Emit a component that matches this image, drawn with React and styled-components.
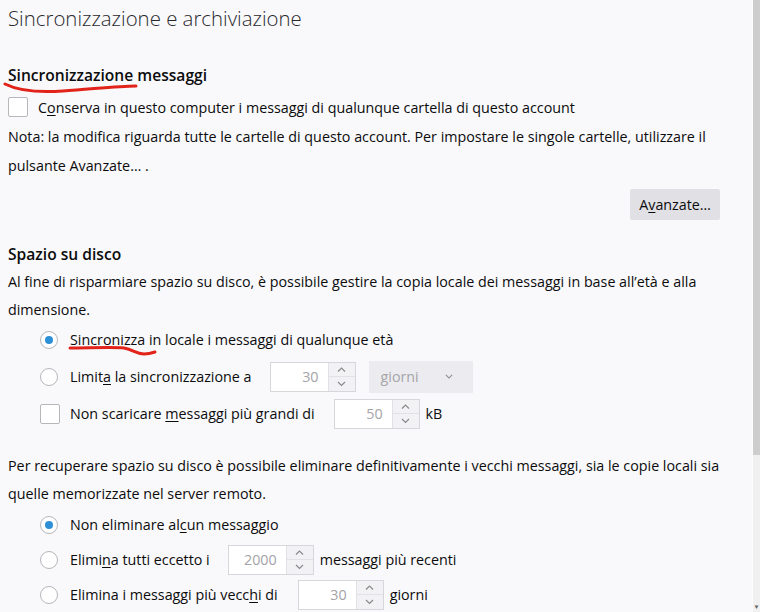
import React from 'react';
import styled, { createGlobalStyle } from 'styled-components';

const GlobalStyle = createGlobalStyle`
  html, body {
    margin: 0;
    padding: 0;
    background: #f9f9fb;
  }
  body {
    font-family: "Open Sans", "Noto Sans", "Liberation Sans", sans-serif;
    color: #0c0c0d;
  }
`;

const Page = styled.div`
  display: flex;
  width: 760px;
  height: 612px;
  overflow: hidden;
  background: #f9f9fb;
`;

const Content = styled.div`
  position: relative;
  flex: 1;
  padding: 0 28px 0 8px;
  overflow: hidden;
  font-size: 14.3px;
`;

const Scrollbar = styled.div`
  width: 7px;
  display: flex;
  flex-direction: column;
  background: #f0f0f0;
  border-left: 1px solid #fcfcfc;
`;

const Thumb = styled.div`
  height: 455px;
  background: #cdcdcd;
`;

const ScrollArrow = styled.div`
  margin-top: auto;
  height: 10px;
  display: flex;
  justify-content: center;
  align-items: center;
  color: #606060;
  font-size: 6px;
`;

const Title = styled.h1`
  margin: 0;
  font-size: 20.4px;
  font-weight: 300;
  line-height: 36px;
  color: #2a2a2e;
`;

const Heading = styled.h2`
  margin: ${(p) => p.$top || 0}px 0 0;
  font-size: 15.6px;
  font-weight: 600;
  line-height: 28px;
`;

const Para = styled.p`
  margin: ${(p) => p.$top || 0}px 0 0;
  line-height: ${(p) => p.$lh || 28}px;
`;

const Row = styled.label`
  display: flex;
  align-items: center;
  height: ${(p) => p.$h || 30}px;
  margin-top: ${(p) => p.$top || 0}px;
  padding-left: ${(p) => (p.$indent ? 32 : 0)}px;
  gap: 10px;
`;

const Group = styled.div`
  margin-top: ${(p) => p.$top || 0}px;
`;

const Box = styled.span`
  width: 18px;
  height: 18px;
  flex: none;
  border: 1px solid #b6b6bb;
  border-radius: 2px;
  background: #fff;
`;

const Radio = styled.span`
  width: 16px;
  height: 16px;
  flex: none;
  margin-right: 2px;
  border: 1px solid #b6b6bb;
  border-radius: 50%;
  background: #fff;
  display: flex;
  align-items: center;
  justify-content: center;

  &::after {
    content: '';
    width: 8px;
    height: 8px;
    border-radius: 50%;
    background: ${(p) => (p.$checked ? '#2d8fd5' : 'transparent')};
  }
`;

const Key = styled.span`
  text-decoration: underline;
  text-underline-offset: 2px;
`;

const Spin = styled.span`
  display: flex;
  width: 86px;
  height: 30px;
  box-sizing: border-box;
  border: 1px solid #d7d7db;
  background: #fff;
  margin: 0 -4px 0 ${(p) => p.$left || 0}px;
  flex: none;
`;

const SpinValue = styled.span`
  flex: 1;
  display: flex;
  align-items: center;
  justify-content: flex-end;
  padding-right: 9px;
  color: #a4a4a8;
`;

const SpinButtons = styled.span`
  width: 26px;
  display: flex;
  flex-direction: column;
  border-left: 1px solid #e2e2e6;
`;

const SpinHalf = styled.span`
  flex: 1;
  display: flex;
  align-items: center;
  justify-content: center;
  background: #f2f2f4;
  & + & {
    border-top: 1px solid #e2e2e6;
  }
`;

const Select = styled.span`
  display: flex;
  align-items: center;
  justify-content: space-between;
  box-sizing: border-box;
  width: 104px;
  height: 32px;
  padding: 0 20px 0 12px;
  margin-left: 7px;
  background: #ececf0;
  color: #a4a4a8;
`;

const ButtonRow = styled.div`
  display: flex;
  justify-content: flex-end;
  margin: 9px 4px 0 0;
`;

const Button = styled.button`
  height: 31px;
  padding: 0 9px;
  border: none;
  border-radius: 2px;
  background: #e1e1e5;
  color: #0c0c0d;
  font: inherit;
`;

const Scribble = styled.svg`
  position: absolute;
  left: ${(p) => p.$x}px;
  top: ${(p) => p.$y}px;
  pointer-events: none;
`;

const Chevron = ({ up, size = 7 }) => (
  <svg width={size + 2} height={size / 2 + 2} viewBox="0 0 9 5.5">
    <path
      d={up ? 'M1 4.5 L4.5 1 L8 4.5' : 'M1 1 L4.5 4.5 L8 1'}
      fill="none"
      stroke="#8a8a8e"
      strokeWidth="1.2"
    />
  </svg>
);

const SpinBox = ({ value, left }) => (
  <Spin $left={left}>
    <SpinValue>{value}</SpinValue>
    <SpinButtons>
      <SpinHalf>
        <Chevron up />
      </SpinHalf>
      <SpinHalf>
        <Chevron />
      </SpinHalf>
    </SpinButtons>
  </Spin>
);

export default function App() {
  return (
    <>
      <GlobalStyle />
      <Page>
        <Content>
          <Title>Sincronizzazione e archiviazione</Title>

          <Heading $top={25}>Sincronizzazione messaggi</Heading>
          <Row $top={3}>
            <Box />
            <span>
              C<Key>o</Key>nserva in questo computer i messaggi di qualunque cartella di questo account
            </span>
          </Row>
          <Para $lh={29}>
            Nota: la modifica riguarda tutte le cartelle di questo account. Per impostare le singole cartelle,
            utilizzare il pulsante Avanzate… .
          </Para>
          <ButtonRow>
            <Button>
              A<Key>v</Key>anzate…
            </Button>
          </ButtonRow>

          <Heading $top={20}>Spazio su disco</Heading>
          <Para>
            Al fine di risparmiare spazio su disco, è possibile gestire la copia locale dei messaggi in base
            all’età e alla dimensione.
          </Para>
          <Group $top={-3}>
            <Row $indent $h={37}>
              <Radio $checked />
              <span>
                Sin<Key>c</Key>ronizza in locale i messaggi di qualunque età
              </span>
            </Row>
            <Row $indent $h={37}>
              <Radio />
              <span>
                Limit<Key>a</Key> la sincronizzazione a
              </span>
              <SpinBox value="30" left={8} />
              <Select>
                giorni
                <Chevron size={6} />
              </Select>
            </Row>
            <Row $indent $h={37}>
              <Box />
              <span>
                Non scaricare <Key>m</Key>essaggi più grandi di
              </span>
              <SpinBox value="50" left={9} />
              kB
            </Row>
          </Group>

          <Para $top={20}>
            Per recuperare spazio su disco è possibile eliminare definitivamente i vecchi messaggi, sia le copie
            locali sia quelle memorizzate nel server remoto.
          </Para>
          <Group $top={-1}>
            <Row $indent $h={35}>
              <Radio $checked />
              <span>
                Non eliminare al<Key>c</Key>un messaggio
              </span>
            </Row>
            <Row $indent $h={35}>
              <Radio />
              <span>
                Elimi<Key>n</Key>a tutti eccetto i
              </span>
              <SpinBox value="2000" left={8} />
              messaggi più recenti
            </Row>
            <Row $indent $h={35}>
              <Radio />
              <span>
                Elimina i messaggi più vecc<Key>h</Key>i di
              </span>
              <SpinBox value="30" left={10} />
              giorni
            </Row>
          </Group>

          <Scribble $x={3} $y={80} width="136" height="16" viewBox="0 0 136 16">
            <path
              d="M2 4 C 14 10, 32 13, 60 11 C 90 9, 115 6, 133 6"
              fill="none"
              stroke="#e2231a"
              strokeWidth="3"
              strokeLinecap="round"
            />
          </Scribble>
          <Scribble $x={68} $y={344} width="90" height="14" viewBox="0 0 90 14">
            <path
              d="M2 4 C 20 4, 45 3, 56 4 C 66 6, 68 10, 76 10 C 80 10, 84 9, 87 8"
              fill="none"
              stroke="#e2231a"
              strokeWidth="3"
              strokeLinecap="round"
            />
          </Scribble>
        </Content>
        <Scrollbar>
          <Thumb />
          <ScrollArrow>▼</ScrollArrow>
        </Scrollbar>
      </Page>
    </>
  );
}
